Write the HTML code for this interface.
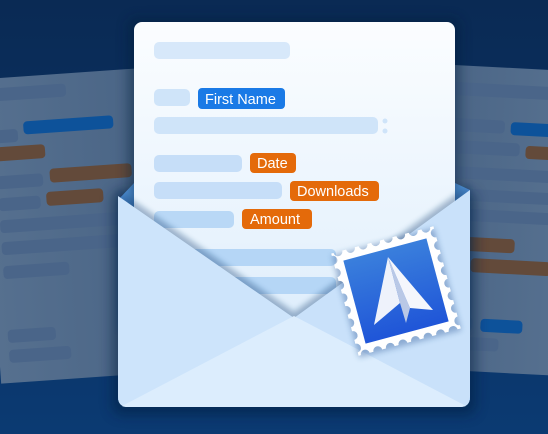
<!DOCTYPE html>
<html><head><meta charset="utf-8"><style>
html,body{margin:0;padding:0;width:548px;height:434px;overflow:hidden;background:#0a2d5a}
svg{display:block}
text{font-family:"Liberation Sans",sans-serif;font-size:14.5px;fill:#fff}
</style></head><body>
<svg width="548" height="434" viewBox="0 0 548 434" xmlns="http://www.w3.org/2000/svg">
<defs>
<linearGradient id="bg" x1="0" y1="0" x2="0" y2="1">
<stop offset="0" stop-color="#0a2a54"/><stop offset="1" stop-color="#0b3a72"/></linearGradient>
<linearGradient id="let" x1="0" y1="0" x2="0" y2="1">
<stop offset="0" stop-color="#fbfdff"/><stop offset="0.6" stop-color="#e8f3fd"/><stop offset="1" stop-color="#d6e9fb"/></linearGradient>
<linearGradient id="blue" x1="0" y1="0" x2="0" y2="1">
<stop offset="0" stop-color="#3a7fdc"/><stop offset="1" stop-color="#1f55d8"/></linearGradient>
<linearGradient id="lp" x1="0" y1="0" x2="1" y2="0">
<stop offset="0" stop-color="#56708f"/><stop offset="1" stop-color="#4a6586"/></linearGradient>
<linearGradient id="rp" x1="0" y1="0" x2="1" y2="0">
<stop offset="0" stop-color="#4a6586"/><stop offset="1" stop-color="#56708f"/></linearGradient>
<mask id="scal">
<rect x="-53" y="-53" width="106" height="106" fill="#fff"/>
<g fill="#000">
<circle cx="-53" cy="-46" r="4.5"/><circle cx="-53" cy="-33" r="4.5"/><circle cx="-53" cy="-20" r="4.5"/><circle cx="-53" cy="-7" r="4.5"/><circle cx="-53" cy="6" r="4.5"/><circle cx="-53" cy="19" r="4.5"/><circle cx="-53" cy="32" r="4.5"/><circle cx="-53" cy="45" r="4.5"/>
<circle cx="53" cy="-46" r="4.5"/><circle cx="53" cy="-33" r="4.5"/><circle cx="53" cy="-20" r="4.5"/><circle cx="53" cy="-7" r="4.5"/><circle cx="53" cy="6" r="4.5"/><circle cx="53" cy="19" r="4.5"/><circle cx="53" cy="32" r="4.5"/><circle cx="53" cy="45" r="4.5"/>
<circle cy="-53" cx="-46" r="4.5"/><circle cy="-53" cx="-33" r="4.5"/><circle cy="-53" cx="-20" r="4.5"/><circle cy="-53" cx="-7" r="4.5"/><circle cy="-53" cx="6" r="4.5"/><circle cy="-53" cx="19" r="4.5"/><circle cy="-53" cx="32" r="4.5"/><circle cy="-53" cx="45" r="4.5"/>
<circle cy="53" cx="-46" r="4.5"/><circle cy="53" cx="-33" r="4.5"/><circle cy="53" cx="-20" r="4.5"/><circle cy="53" cx="-7" r="4.5"/><circle cy="53" cx="6" r="4.5"/><circle cy="53" cx="19" r="4.5"/><circle cy="53" cx="32" r="4.5"/><circle cy="53" cx="45" r="4.5"/>
</g></mask>
<filter id="sh" x="-20%" y="-20%" width="140%" height="140%"><feGaussianBlur stdDeviation="6"/></filter>
<filter id="sh2" x="-20%" y="-20%" width="140%" height="140%"><feGaussianBlur stdDeviation="3"/></filter>
</defs>
<rect width="548" height="434" fill="url(#bg)"/>
<g transform="rotate(-4 0 80)">
<rect x="-20" y="78" width="160" height="305" fill="url(#lp)"/>
<g fill="#4a6589">
<rect x="-10" y="88" width="75" height="13" rx="4"/>
<rect x="-10" y="130" width="24" height="13" rx="4"/>
<rect x="-10" y="176" width="46" height="13" rx="4"/>
<rect x="-10" y="198" width="42" height="13" rx="4"/>
<rect x="-10" y="220" width="140" height="13" rx="4"/>
<rect x="-10" y="242" width="140" height="13" rx="4"/>
<rect x="-10" y="266" width="66" height="13" rx="4"/>
<rect x="-10" y="330" width="48" height="13" rx="4"/>
<rect x="-10" y="350" width="62" height="13" rx="4"/>
</g>
<rect x="20" y="123" width="90" height="13" rx="4" fill="#0d529a"/>
<rect x="-10" y="147" width="50" height="14" rx="4" fill="#634a3a"/>
<rect x="43" y="172" width="82" height="14" rx="4" fill="#634a3a"/>
<rect x="38" y="195" width="57" height="14" rx="4" fill="#634a3a"/>
</g>
<g transform="rotate(3 455 65)">
<rect x="440" y="65" width="130" height="305" fill="url(#rp)"/>
<g fill="#4a6589">
<rect x="455" y="82" width="110" height="13" rx="4"/>
<rect x="455" y="118" width="53" height="13" rx="4"/>
<rect x="455" y="140" width="69" height="13" rx="4"/>
<rect x="455" y="166" width="110" height="12" rx="4"/>
<rect x="455" y="188" width="110" height="12" rx="4"/>
<rect x="455" y="208" width="110" height="12" rx="4"/>
<rect x="470" y="316" width="16" height="13" rx="4"/>
<rect x="470" y="336" width="43" height="13" rx="4"/>
</g>
<rect x="514" y="119" width="50" height="13" rx="4" fill="#0d529a"/>
<rect x="530" y="142" width="40" height="13" rx="4" fill="#634a3a"/>
<rect x="465" y="236" width="59" height="14" rx="4" fill="#634a3a"/>
<rect x="481" y="257" width="80" height="14" rx="4" fill="#634a3a"/>
<rect x="494" y="317" width="42" height="13" rx="4" fill="#0d529a"/>
</g>
<rect x="112" y="190" width="364" height="225" rx="10" fill="#061d3c" opacity="0.5" filter="url(#sh)"/>
<path d="M118 200 L134 183 L455 183 L470 190 L470 400 L118 400 Z" fill="#5a9ee6"/>
<rect x="128" y="18" width="332" height="300" rx="8" fill="#041a38" opacity="0.45" filter="url(#sh)"/>
<rect x="134" y="22" width="321" height="360" rx="8" fill="url(#let)"/>
<g fill="#cfe4f9">
<rect x="154" y="42" width="136" height="17" rx="5" fill="#d7e8fa"/>
<rect x="154" y="89" width="36" height="17" rx="5"/>
<rect x="154" y="117" width="224" height="17" rx="5"/>
<circle cx="385" cy="121" r="2.5"/><circle cx="385" cy="131" r="2.5"/>
<rect x="154" y="155" width="88" height="17" rx="5" fill="#c6def8"/>
<rect x="154" y="182" width="128" height="17" rx="5" fill="#c6def8"/>
<rect x="154" y="211" width="80" height="17" rx="5" fill="#b9d8f6"/>
<rect x="154" y="249" width="182" height="17" rx="5" fill="#b5d6f6"/>
<rect x="154" y="277" width="182" height="17" rx="5" fill="#b5d6f6"/>
</g>
<rect x="198" y="88" width="87" height="21" rx="4" fill="#1a7ae6"/>
<text x="205" y="104">First Name</text>
<rect x="250" y="153" width="46" height="20" rx="4" fill="#e46a0a"/>
<text x="257" y="168">Date</text>
<rect x="290" y="181" width="89" height="20" rx="4" fill="#e46a0a"/>
<text x="297" y="196">Downloads</text>
<rect x="242" y="209" width="70" height="20" rx="4" fill="#e46a0a"/>
<text x="250" y="224">Amount</text>
<path d="M118 190 L294 312 L470 184 L470 330 L118 330 Z" fill="#0a3a70" opacity="0.35" filter="url(#sh2)"/>
<path d="M118 196 L294 318 L140 407 L128 407 Q118 407 118 397 Z" fill="#cde4fb"/>
<path d="M470 190 L294 318 L450 407 L460 407 Q470 407 470 397 Z" fill="#c9e1fa"/>
<path d="M122 406 L294 316 L466 406 Q462 407 460 407 L128 407 Q124 407 122 406 Z" fill="#dcedfd"/>
<g transform="translate(396 291) rotate(-15)">
<rect x="-53" y="-51" width="106" height="106" fill="#1a4a8a" opacity="0.35" filter="url(#sh2)"/>
<rect x="-53" y="-53" width="106" height="106" fill="#fff" mask="url(#scal)"/>
<rect x="-43" y="-43" width="86" height="86" fill="url(#blue)"/>
</g>
<path d="M388 257 L374 325 L400 303 Z" fill="#eef2fb"/>
<path d="M388 257 L400 303 L406 323 L410 308 Z" fill="#b9c8e6"/>
<path d="M388 257 L410 308 L433 310 Z" fill="#f4f6fc"/>
</svg>
</body></html>
